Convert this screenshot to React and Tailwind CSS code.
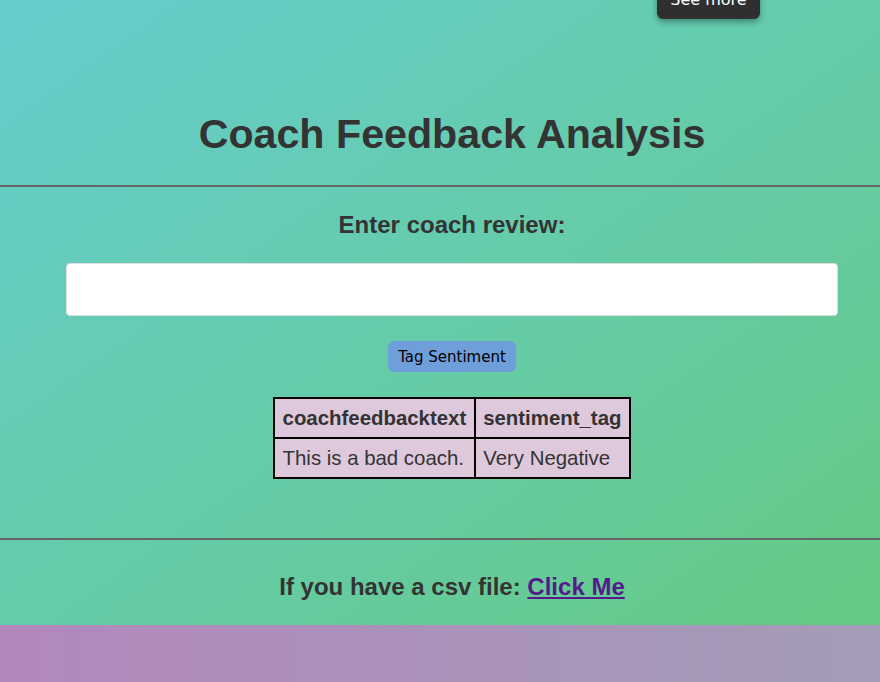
import React, { useState } from 'react';

const rows = [{ text: 'This is a bad coach.', tag: 'Very Negative' }];

export default function App() {
  const [review, setReview] = useState('');

  return (
    <div className="min-h-screen bg-gradient-to-r from-[#b288bd] to-[#a39cb7] font-[family-name:Liberation_Sans,Arial,sans-serif] text-[#333]">
      <div className="relative bg-gradient-to-br from-[#66cdcd] to-[#66c984]">
        <button className="absolute left-[657px] top-[-22px] h-[41px] w-[103px] rounded-md bg-[#2f2f2f] pt-[2px] text-[16px] text-white shadow-[0_3px_6px_rgba(0,0,0,0.35)] font-[family-name:DejaVu_Sans,sans-serif]">
          See more
        </button>

        <div className="pl-6 pt-[110px] pb-[27px]">
          <h1 className="text-center text-[41.2px] font-bold leading-[48px]">Coach Feedback Analysis</h1>
        </div>
        <hr className="border-t-2 border-[#666]" />

        <div className="flex flex-col items-center pl-6 pt-[22px] pb-[59px]">
          <h2 className="text-[24px] font-bold leading-[32px]">Enter coach review:</h2>
          <input
            value={review}
            onChange={(e) => setReview(e.target.value)}
            className="mt-[22px] h-[53px] w-[772px] rounded border border-[#ddd] bg-white px-3 outline-none"
          />
          <button className="mt-[25px] h-[31px] rounded-md bg-[#6f9fdb] px-[10px] pt-[2px] text-[15px] text-black font-[family-name:DejaVu_Sans,sans-serif]">
            Tag Sentiment
          </button>

          <table className="mt-[25px] border-collapse border-2 border-black bg-[#dec8dc] text-[20.4px]">
            <thead>
              <tr>
                <th className="h-[40px] border-2 border-black px-[7.5px] text-left font-bold">coachfeedbacktext</th>
                <th className="h-[40px] border-2 border-black px-[7.5px] text-left font-bold">sentiment_tag</th>
              </tr>
            </thead>
            <tbody>
              {rows.map((r) => (
                <tr key={r.text}>
                  <td className="h-[40px] border-2 border-black px-[7.5px]">{r.text}</td>
                  <td className="h-[40px] border-2 border-black px-[7.5px]">{r.tag}</td>
                </tr>
              ))}
            </tbody>
          </table>
        </div>
        <hr className="border-t-2 border-[#666]" />

        <div className="pl-6 pt-[31px] pb-[22px] text-center text-[24px] font-bold leading-[32px]">
          If you have a csv file:{' '}
          <a href="#" className="text-[#551a8b] underline">Click Me</a>
        </div>
      </div>
    </div>
  );
}
